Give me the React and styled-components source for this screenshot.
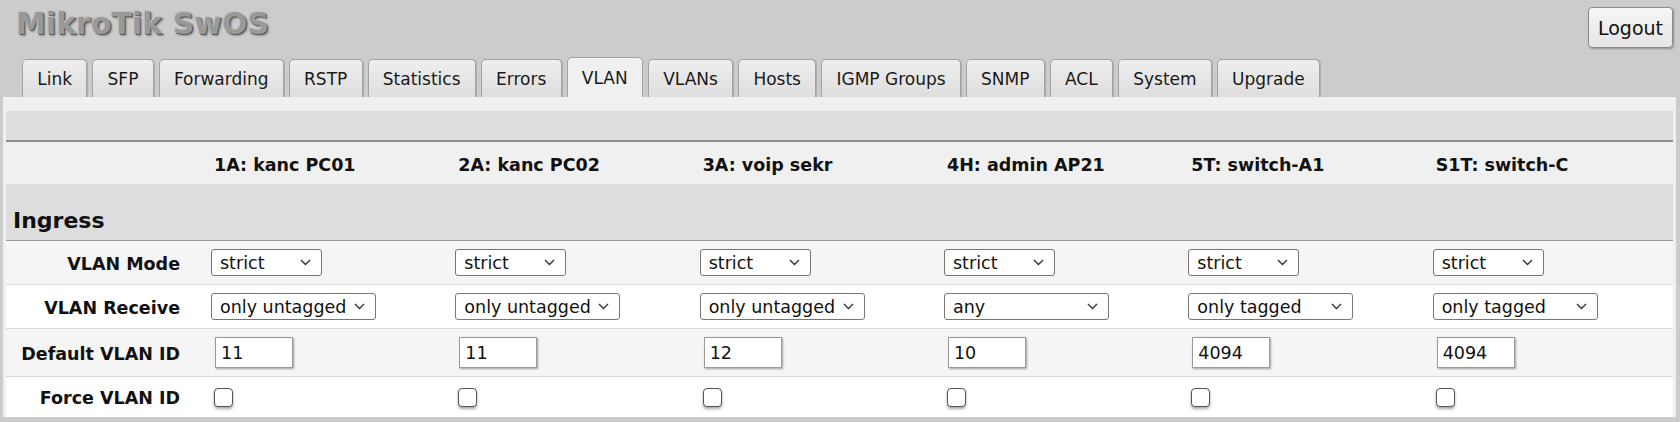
import React from 'react'
import styled, { createGlobalStyle } from 'styled-components'

const GlobalStyle = createGlobalStyle`
  * {
    box-sizing: border-box;
  }
  body {
    margin: 0;
    background: #cccccc;
    font-family: "DejaVu Sans", Verdana, sans-serif;
    color: #111;
  }
`

export const Page = styled.div`
  width: 1680px;
  min-height: 422px;
  display: flex;
  flex-direction: column;
`

export const TopBar = styled.div`
  height: 57px;
  display: flex;
  justify-content: space-between;
  align-items: flex-start;
  padding: 0 7px 0 16px;
`

export const Brand = styled.h1`
  margin: 9px 0 0;
  font-size: 30px;
  line-height: 1;
  font-weight: 700;
  color: #999999;
  text-shadow: -1px -1px 0 #c2c2c2, 1px 1px 0 #5a5a5a, 2px 2px 2px rgba(0, 0, 0, .3);
`

export const LogoutButton = styled.button`
  margin-top: 7px;
  width: 85px;
  height: 41px;
  padding: 0;
  font-family: inherit;
  font-size: 19px;
  color: #111;
  background: linear-gradient(#f6f6f6, #e6e6e6);
  border: 1px solid #8a8a8a;
  border-radius: 4px;
  box-shadow: 1px 1px 2px rgba(0, 0, 0, .3);
`

export const TabStrip = styled.div`
  height: 40px;
  display: flex;
  align-items: flex-end;
  gap: 5px;
  padding-left: 22px;
`

export const Tab = styled.div`
  height: ${(props) => (props.$active ? '40px' : '38px')};
  padding: 0 14.25px;
  display: flex;
  align-items: center;
  font-size: 17px;
  color: #1a1a1a;
  background: ${(props) => (props.$active ? '#f0f0f0' : 'linear-gradient(#eeeeee, #dedede)')};
  border: 1px solid #a3a3a3;
  border-bottom: none;
  border-radius: 5px 5px 0 0;
  box-shadow: ${(props) => (props.$active ? 'none' : '1px 0 1px rgba(0, 0, 0, .15)')};
`

export const Panel = styled.div`
  margin: 0 4px 4px 3px;
  padding: 14px 3px 0;
  background: #f0f0f0;
`

export const BlankBand = styled.div`
  height: 31px;
  background: #dddddd;
  border-bottom: 2px solid #8c8c8c;
`

export const GridRow = styled.div`
  display: grid;
  grid-template-columns: 201px repeat(6, 1fr);
  align-items: center;
`

export const HeaderRow = styled(GridRow)`
  height: 42px;
  padding-top: 3px;
  background: #f0f0f0;
`

export const PortName = styled.div`
  padding-left: 7px;
  font-size: 17.5px;
  font-weight: 700;
`

export const SectionBand = styled.div`
  height: 57px;
  display: flex;
  align-items: flex-end;
  padding: 0 0 8px 7px;
  background: #dddddd;
  border-bottom: 1px solid #9c9c9c;
`

export const SectionTitle = styled.h2`
  margin: 0;
  font-size: 22px;
  line-height: 1;
  font-weight: 700;
`

export const FieldRow = styled(GridRow)`
  min-height: 41px;
  padding: 8px 0;
  background: ${(props) => (props.$striped ? '#f5f5f5' : '#ffffff')};
  border-top: ${(props) => (props.$first ? 'none' : '1px solid #d9d9d9')};
`

export const FieldLabel = styled.div`
  padding: 2px 27px 0 0;
  text-align: right;
  font-size: 17.5px;
  font-weight: 700;
`

export const Cell = styled.div`
  padding-left: 4px;
  display: flex;
  align-items: center;
`

export const SelectWrap = styled.div`
  position: relative;
  display: inline-flex;
`

export const Select = styled.select`
  appearance: none;
  width: ${(props) => props.$width}px;
  height: 27px;
  padding: 0 0 0 8px;
  font-family: inherit;
  font-size: 17.5px;
  color: #111;
  background: #fff;
  border: 1px solid #767676;
  border-radius: 3px;
`

export const Chevron = styled.svg`
  position: absolute;
  right: 11px;
  top: 10px;
  pointer-events: none;
`

export const NumberInput = styled.input`
  width: 78px;
  height: 31px;
  margin-left: 4px;
  padding: 0 5px;
  font-family: inherit;
  font-size: 17.5px;
  color: #111;
  background: #fff;
  border: 1px solid #9a9a9a;
  box-shadow: 1px 1px 2px rgba(0, 0, 0, .35);
  outline: none;
`

export const Checkbox = styled.input`
  appearance: none;
  flex: none;
  width: 19px;
  height: 19px;
  margin: 0 0 0 3px;
  background: #fff;
  border: 1.5px solid #555;
  border-radius: 4px;
  box-shadow: 0 2px 3px rgba(0, 0, 0, .35);
`

const tabs = ['Link', 'SFP', 'Forwarding', 'RSTP', 'Statistics', 'Errors', 'VLAN', 'VLANs', 'Hosts', 'IGMP Groups', 'SNMP', 'ACL', 'System', 'Upgrade']

const ports = [
  { name: '1A: kanc PC01', mode: 'strict', receive: 'only untagged', vid: '11' },
  { name: '2A: kanc PC02', mode: 'strict', receive: 'only untagged', vid: '11' },
  { name: '3A: voip sekr', mode: 'strict', receive: 'only untagged', vid: '12' },
  { name: '4H: admin AP21', mode: 'strict', receive: 'any', vid: '10' },
  { name: '5T: switch-A1', mode: 'strict', receive: 'only tagged', vid: '4094' },
  { name: 'S1T: switch-C', mode: 'strict', receive: 'only tagged', vid: '4094' },
]

const modes = ['disabled', 'optional', 'enabled', 'strict']
const receives = ['any', 'only tagged', 'only untagged']

const Dropdown = ({ value, options, width }) => (
  <SelectWrap>
    <Select $width={width} defaultValue={value}>
      {options.map((o) => (
        <option key={o}>{o}</option>
      ))}
    </Select>
    <Chevron width="11" height="7" viewBox="0 0 11 7">
      <path d="M1 1l4.5 4.5L10 1" fill="none" stroke="#333" strokeWidth="1.4" />
    </Chevron>
  </SelectWrap>
)

const App = () => {
  return (
    <Page>
      <GlobalStyle />
      <TopBar>
        <Brand>MikroTik SwOS</Brand>
        <LogoutButton>Logout</LogoutButton>
      </TopBar>
      <TabStrip>
        {tabs.map((t) => (
          <Tab key={t} $active={t === 'VLAN'}>{t}</Tab>
        ))}
      </TabStrip>
      <Panel>
        <BlankBand />
        <HeaderRow>
          <div />
          {ports.map((p) => (
            <PortName key={p.name}>{p.name}</PortName>
          ))}
        </HeaderRow>
        <SectionBand>
          <SectionTitle>Ingress</SectionTitle>
        </SectionBand>
        <FieldRow $first $striped>
          <FieldLabel>VLAN Mode</FieldLabel>
          {ports.map((p) => (
            <Cell key={p.name}>
              <Dropdown value={p.mode} options={modes} width={111} />
            </Cell>
          ))}
        </FieldRow>
        <FieldRow>
          <FieldLabel>VLAN Receive</FieldLabel>
          {ports.map((p) => (
            <Cell key={p.name}>
              <Dropdown value={p.receive} options={receives} width={165} />
            </Cell>
          ))}
        </FieldRow>
        <FieldRow $striped>
          <FieldLabel>Default VLAN ID</FieldLabel>
          {ports.map((p) => (
            <Cell key={p.name}>
              <NumberInput type="text" defaultValue={p.vid} />
            </Cell>
          ))}
        </FieldRow>
        <FieldRow>
          <FieldLabel>Force VLAN ID</FieldLabel>
          {ports.map((p) => (
            <Cell key={p.name}>
              <Checkbox type="checkbox" />
            </Cell>
          ))}
        </FieldRow>
      </Panel>
    </Page>
  )
}

export default App
